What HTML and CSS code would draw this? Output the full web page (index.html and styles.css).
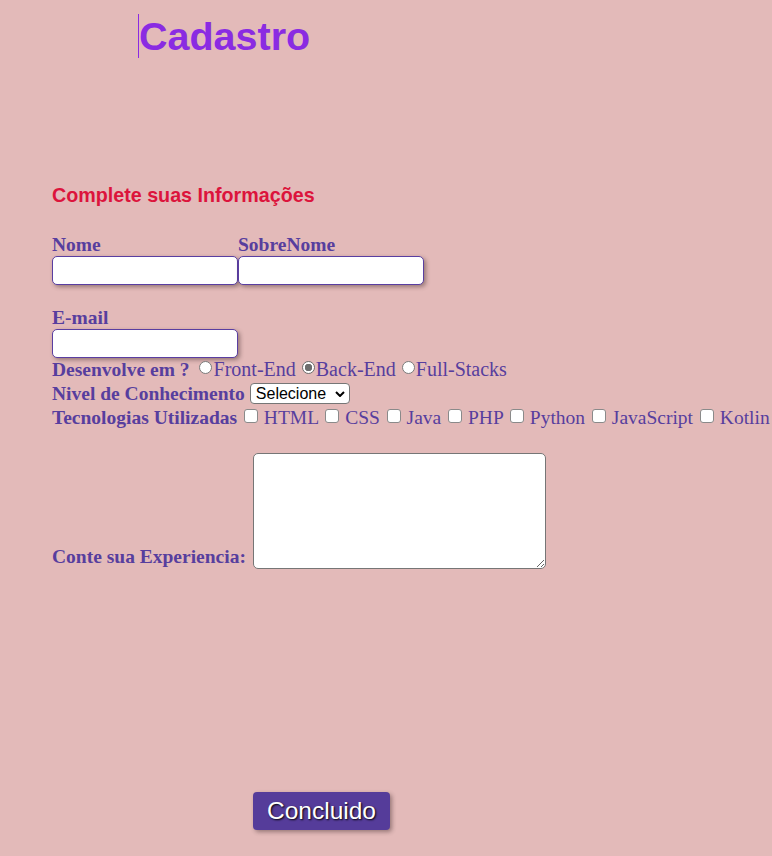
FILE: index.html
```html
<!DOCTYPE html>
<html lang="pt-BR">
<head>
<meta charset="utf-8">
<title>Cadastro</title>
<link rel="stylesheet" href="styles.css">
</head>
<body>
<header class="top">
  <h1 class="title">Cadastro</h1>
</header>
<main class="form">
  <h2 class="subtitle">Complete suas Informações</h2>
  <div class="pair">
    <div class="field">
      <label class="lbl">Nome</label>
      <input class="txt" type="text">
    </div>
    <div class="field">
      <label class="lbl">SobreNome</label>
      <input class="txt" type="text">
    </div>
  </div>
  <div class="field email">
    <label class="lbl">E-mail</label>
    <input class="txt" type="email">
  </div>
  <div class="line"><span class="lbl">Desenvolve em ?</span><input class="radio first" type="radio" name="d">Front-End<input class="radio" type="radio" name="d" checked>Back-End<input class="radio" type="radio" name="d">Full-Stacks</div>
  <div class="line nivel"><span class="lbl">Nivel de Conhecimento</span> <span class="selwrap"><select class="sel"><option>Selecione</option></select><svg class="chev" viewBox="0 0 10 6" width="10" height="6"><path d="M1 1 L5 5 L9 1" fill="none" stroke="#000" stroke-width="2"/></svg></span></div>
  <div class="line techs"><span class="lbl">Tecnologias Utilizadas</span> <input class="chk" type="checkbox"> HTML <input class="chk" type="checkbox"> CSS <input class="chk" type="checkbox"> Java <input class="chk" type="checkbox"> PHP <input class="chk" type="checkbox"> Python <input class="chk" type="checkbox"> JavaScript <input class="chk" type="checkbox"> Kotlin</div>
  <div class="line exp"><span class="lbl">Conte sua Experiencia:</span> <textarea class="area"></textarea></div>
  <div class="actions"><button class="btn" type="button">Concluido</button></div>
</main>
</body>
</html>
```
FILE: styles.css
```css
html, body {
  margin: 0;
  padding: 0;
}
body {
  background: #e3bab9;
  font-family: "Liberation Serif", "Times New Roman", serif;
  color: #573e9e;
  width: 772px;
  height: 856px;
  overflow: hidden;
}
.top {
  padding: 14px 0 0 138px;
}
.title {
  margin: 0;
  display: inline-block;
  border-left: 1px solid #8a2be2;
  font-family: "Liberation Sans", Arial, sans-serif;
  font-weight: bold;
  font-size: 39.5px;
  line-height: 44px;
  height: 44px;
  color: #8a2be2;
}
.form {
  padding-left: 52px;
}
.subtitle {
  margin: 125px 0 0 0;
  font-family: "Liberation Sans", Arial, sans-serif;
  font-weight: bold;
  font-size: 19.7px;
  line-height: 24px;
  color: #dc143c;
}
.pair {
  display: flex;
  margin-top: 27px;
}
.field {
  display: flex;
  flex-direction: column;
  width: 186px;
}
.email {
  margin-top: 22px;
}
.lbl {
  font-weight: bold;
  font-size: 19.5px;
  line-height: 22px;
  height: 22px;
}
.txt {
  box-sizing: border-box;
  width: 186px;
  height: 29px;
  margin: 0;
  border: 1px solid #5a3ea1;
  border-radius: 5px;
  background: #fff;
  box-shadow: 2px 2px 4px rgba(60, 40, 40, 0.45);
}
.line {
  font-size: 20px;
  line-height: 23px;
  height: 23px;
  white-space: nowrap;
}
.line .lbl {
  line-height: 23px;
}
.nivel {
  height: 25px;
  line-height: 25px;
}
.nivel .lbl {
  line-height: 25px;
}
.techs {
  font-size: 19.5px;
}
.radio {
  appearance: none;
  -webkit-appearance: none;
  box-sizing: border-box;
  width: 13px;
  height: 13px;
  margin: 0 1px 0 6px;
  border: 1px solid #7a7a7a;
  border-radius: 50%;
  background: #fff;
  vertical-align: 2px;
}
.radio.first {
  margin-left: 9px;
  margin-right: 2px;
}
.radio:checked {
  background: radial-gradient(circle, #6e6e6e 0 3.5px, #fff 4px);
  border-color: #6e6e6e;
  border-width: 1.5px;
}
.selwrap {
  position: relative;
  display: inline-block;
  vertical-align: 1px;
}
.sel {
  appearance: none;
  -webkit-appearance: none;
  box-sizing: border-box;
  font-family: "Liberation Sans", Arial, sans-serif;
  font-size: 16px;
  height: 21px;
  width: 100px;
  margin: 0;
  border-radius: 4px;
  border: 1px solid #767676;
  background: #fff;
  color: #000;
  padding: 0 0 0 5px;
  line-height: 19px;
  display: block;
}
.chev {
  position: absolute;
  right: 5px;
  top: 8px;
  pointer-events: none;
}
.chk {
  appearance: none;
  -webkit-appearance: none;
  box-sizing: border-box;
  width: 14px;
  height: 14px;
  margin: 0 1px 0 2px;
  border: 1.5px solid #8a8a8a;
  border-radius: 3px;
  background: #fff;
  vertical-align: 1px;
}
.exp {
  margin-top: 24px;
  height: auto;
}
.area {
  box-sizing: border-box;
  width: 293px;
  height: 116px;
  border: 1px solid #767676;
  border-radius: 5px;
  vertical-align: -6px;
  margin: 0 0 0 2px;
  background: #fff;
}
.actions {
  padding: 223px 0 0 201px;
}
.btn {
  width: 137px;
  height: 38px;
  border: none;
  border-radius: 4px;
  background: #553c9a;
  color: #fff;
  font-family: "Liberation Sans", Arial, sans-serif;
  font-size: 24.5px;
  text-shadow: 1px 1px 2px #000;
  box-shadow: 2px 2px 4px rgba(60, 40, 40, 0.45);
  padding: 0;
}
```
